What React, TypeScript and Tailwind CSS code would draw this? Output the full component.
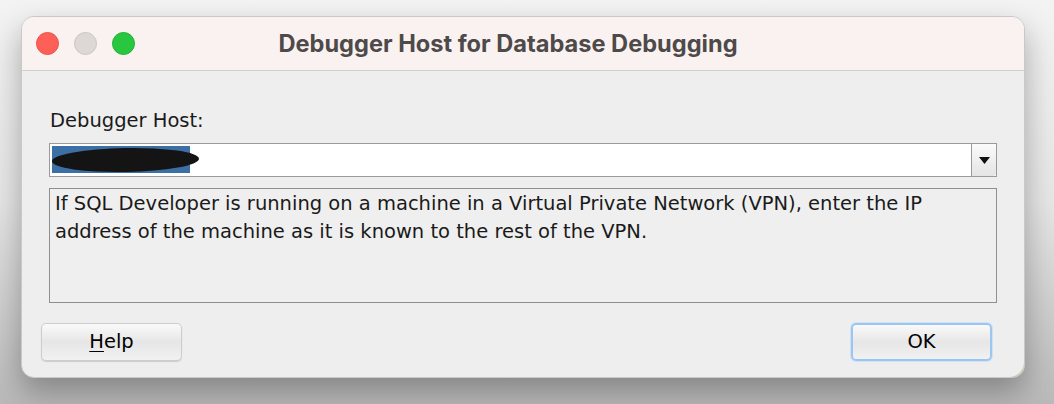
import React from "react";

const uiFont = { fontFamily: '"DejaVu Sans", "Liberation Sans", sans-serif' };

function TrafficLights() {
  return (
    <div className="flex items-center gap-[15px] pl-[14px]">
      <span className="block w-[23px] h-[23px] rounded-full bg-[#fe5f57] border border-[#e5534b]" />
      <span className="block w-[23px] h-[23px] rounded-full bg-[#ddd7d6] border border-[#cbc5c4]" />
      <span className="block w-[23px] h-[23px] rounded-full bg-[#29c740] border border-[#22b036]" />
    </div>
  );
}

function MacButton({ label, focused }: { label: React.ReactNode; focused?: boolean }) {
  return (
    <button
      className={
        "w-[141px] h-[38px] rounded-[5px] text-[19.5px] text-black flex items-center justify-center bg-gradient-to-b from-[#fafafa] via-[#e6e6e6] to-[#f1f1f1] " +
        (focused
          ? "border-2 border-[#9cc6ef] shadow-[0_0_0_1px_#cfe3f7]"
          : "border border-[#cdcdcd] shadow-[0_1px_1px_rgba(0,0,0,0.15)]")
      }
      style={uiFont}
    >
      {label}
    </button>
  );
}

export default function App() {
  return (
    <div className="w-[1054px] h-[404px] overflow-hidden bg-gradient-to-b from-[#f3f3f3] via-[#e6e6e6] to-[#b9b9b9] pt-[16px] pl-[21px]">
      <div className="relative w-[1004px] h-[362px] rounded-[13px] bg-[#eeeeee] border border-[#c9c9c9] shadow-[0_14px_30px_rgba(0,0,0,0.3)] overflow-hidden flex flex-col">
        {/* title bar */}
        <div className="relative h-[54px] shrink-0 bg-[#faf2f1] border-b border-[#d2cfcf] flex items-center">
          <TrafficLights />
          <div
            className="absolute inset-0 flex items-center justify-center text-[23.6px] font-bold text-[#4e4a4a] pr-[30px]"
            style={{ fontFamily: 'Inter, "Liberation Sans", sans-serif' }}
          >
            Debugger Host for Database Debugging
          </div>
        </div>

        {/* body */}
        <div className="flex flex-col px-[27px] pt-[38px]" style={uiFont}>
          <div className="text-[19.5px] leading-[24px] text-[#1a1a1a] pl-[1px]">Debugger Host:</div>

          <div className="mt-[10px] h-[34px] flex border border-[#9a9a9a] bg-white">
            <div className="flex-1 relative pl-[2px] pt-[2px]">
              <div className="w-[138px] h-[27px] bg-[#3b6fa6]" />
              <div className="absolute left-[2px] top-[4px] w-[147px] h-[24px] rounded-[50%] bg-[#141414] rotate-[-1deg]" />
            </div>
            <div className="w-[25px] border-l border-[#9a9a9a] rounded-r-[3px] bg-gradient-to-b from-[#fbfbfb] to-[#e4e4e4] flex items-center justify-center">
              <svg width="11" height="7" viewBox="0 0 11 7">
                <path d="M0 0 H11 L5.5 7 Z" fill="#111" />
              </svg>
            </div>
          </div>

          <div className="mt-[11px] h-[115px] border border-[#8f8f8f] bg-[#efefef] pl-[5px] pt-[1px] text-[19.5px] leading-[28px] text-[#1a1a1a]">
            <p>If SQL Developer is running on a machine in a Virtual Private Network (VPN), enter the IP</p>
            <p>address of the machine as it is known to the rest of the VPN.</p>
          </div>
        </div>

        {/* buttons */}
        <div className="flex justify-between pl-[19px] pr-[32px] mt-[20px]">
          <MacButton
            label={
              <span>
                <span className="underline underline-offset-[3px]">H</span>elp
              </span>
            }
          />
          <MacButton label="OK" focused />
        </div>

        {/* resize grip */}
        <svg className="absolute right-0 bottom-0" width="16" height="16" viewBox="0 0 16 16">
          <path d="M16 2 Q15 14 2 16 L16 16 Z" fill="#c9c8b4" />
        </svg>
      </div>
    </div>
  );
}
